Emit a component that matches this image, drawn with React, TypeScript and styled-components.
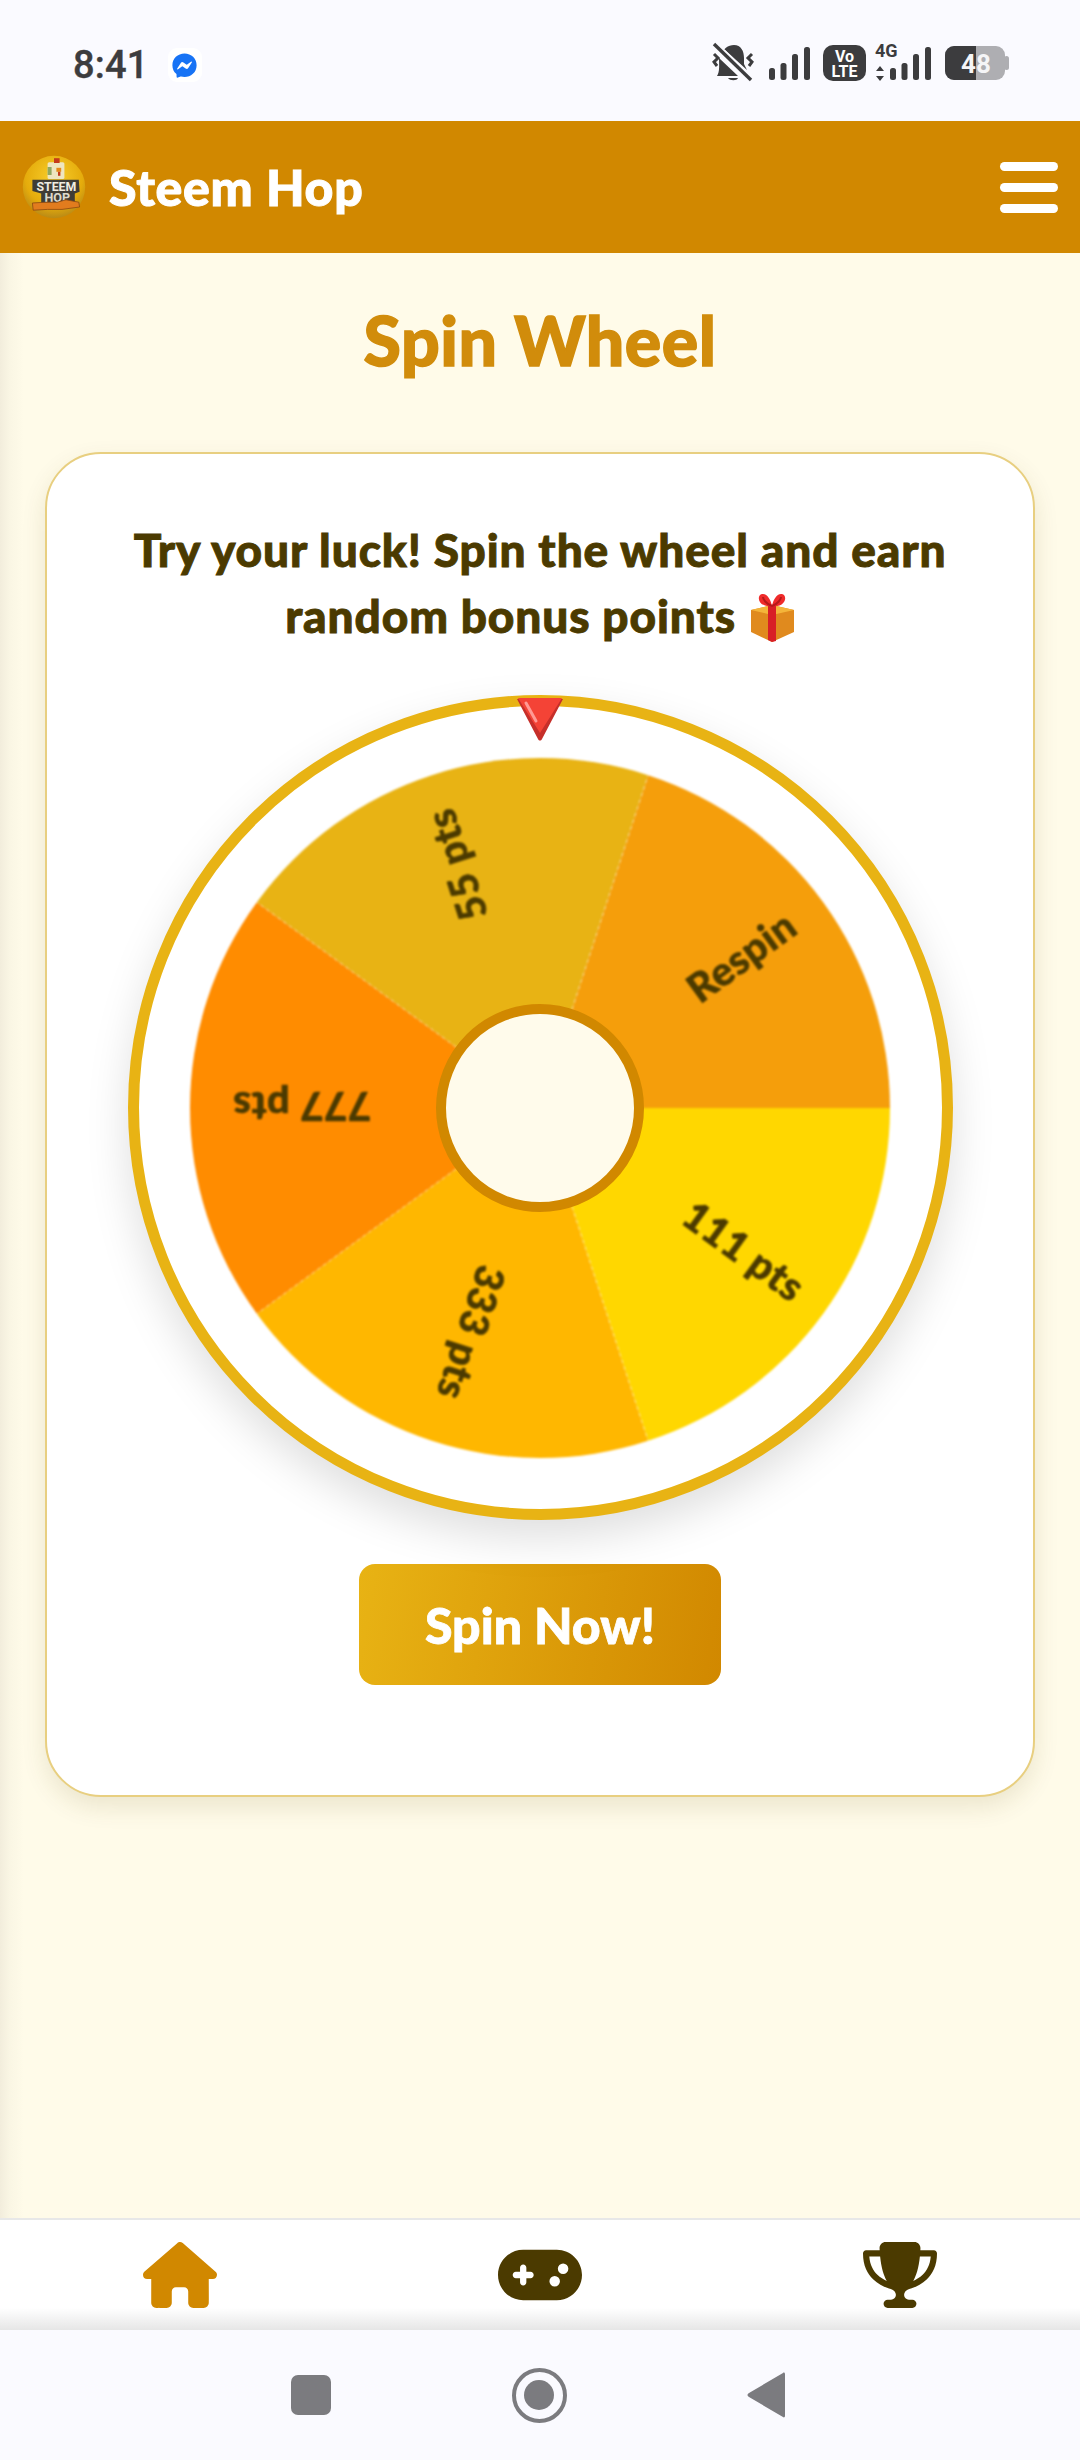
import styled, { createGlobalStyle } from "styled-components";
import { FaFacebookMessenger, FaGamepad, FaHouse, FaTrophy } from "react-icons/fa6";

const GlobalStyle = createGlobalStyle`
  html, body {
    margin: 0;
    padding: 0;
    background: #fffbe9;
  }
  * {
    box-sizing: border-box;
  }
`;

const FONT = `Lato, "Noto Sans", sans-serif`;
const DARK = "#4b3a00";
const GOLD = "#d18800";
const GREY = "#3c3c3e";

const Page = styled.div`
  width: 1080px;
  height: 2460px;
  display: flex;
  flex-direction: column;
  overflow: hidden;
  font-family: ${FONT};
`;

const StatusBar = styled.div`
  height: 121px;
  background: #fafaff;
  display: flex;
  justify-content: space-between;
  padding: 42px 71px 0 73px;
`;

const StatusLeft = styled.div`
  display: flex;
  align-items: center;
  height: 40px;
  margin-top: 3px;
  gap: 19px;
`;

const Time = styled.span`
  font-family: Roboto, sans-serif;
  font-weight: 500;
  font-size: 38px;
  line-height: 40px;
  color: ${GREY};
  letter-spacing: 0.2px;
  -webkit-text-stroke: 0.4px ${GREY};
`;

const MessengerBadge = styled.div`
  width: 34px;
  height: 34px;
  border-radius: 9px;
  background: #fff;
  display: flex;
  align-items: center;
  justify-content: center;
  color: #1773f5;
`;

const StatusRight = styled.div`
  display: flex;
  height: 40px;
`;

const StatusIcon = styled.svg<{ $gap: number }>`
  display: block;
  height: 40px;
  margin-right: ${(p) => p.$gap}px;
  overflow: visible;
`;

const IconText = styled.text`
  font-family: Roboto, sans-serif;
  font-weight: 700;
`;

const AppHeader = styled.header`
  height: 132px;
  background: ${GOLD};
  display: flex;
  align-items: center;
  justify-content: space-between;
  padding: 0 22px;
`;

const Brand = styled.div`
  display: flex;
  align-items: center;
  gap: 23px;
`;

const BrandName = styled.span`
  color: #fff;
  font-weight: 900;
  font-size: 50px;
  letter-spacing: 0.7px;
  -webkit-text-stroke: 1px #fff;
`;

const Burger = styled.div`
  width: 58px;
  display: flex;
  flex-direction: column;
  gap: 12px;
`;

const BurgerLine = styled.span`
  display: block;
  height: 9px;
  border-radius: 5px;
  background: #fff;
`;

const Main = styled.main`
  flex: 1;
  padding: 47px 45px 0;
  background: linear-gradient(90deg, #f2eddc 0, #faf6e4 10px, #fffbe9 24px);
`;

const Title = styled.h1`
  margin: 0 0 72px;
  height: 80px;
  line-height: 80px;
  text-align: center;
  color: #d18c0b;
  font-size: 68px;
  font-weight: 900;
  letter-spacing: 0.5px;
  -webkit-text-stroke: 1.4px #d18c0b;
`;

const Card = styled.section`
  height: 1345px;
  background: #fff;
  border: 2px solid #e8cf80;
  border-radius: 56px;
  box-shadow: 0 10px 24px rgba(90, 70, 0, 0.12);
  padding: 63px 0 0;
  display: flex;
  flex-direction: column;
  align-items: center;
`;

const Intro = styled.p`
  margin: 0 0 46px;
  font-size: 46px;
  line-height: 66px;
  font-weight: 900;
  letter-spacing: 0.9px;
  color: ${DARK};
  text-align: center;
  -webkit-text-stroke: 0.9px ${DARK};
`;

const GiftIcon = styled.svg`
  width: 45px;
  height: 49px;
  vertical-align: -9px;
  margin-left: 2px;
`;

const Wheel = styled.div`
  position: relative;
  width: 825px;
  height: 825px;
  flex: none;
  border: 11px solid #e8b314;
  border-radius: 50%;
  background: #fff;
  box-shadow: 0 18px 44px rgba(0, 0, 0, 0.13);
  display: flex;
  align-items: center;
  justify-content: center;
`;

const Slices = styled.svg`
  width: 700px;
  height: 700px;
  display: block;
  filter: blur(0.9px);
`;

const SliceLabel = styled.text`
  font-family: ${FONT};
  font-weight: 900;
  font-size: 40px;
  letter-spacing: 0.6px;
  fill: ${DARK};
  stroke: ${DARK};
  stroke-width: 0.6px;
  text-anchor: middle;
  dominant-baseline: middle;
`;

const Hub = styled.div`
  position: absolute;
  top: 50%;
  left: 50%;
  width: 208px;
  height: 208px;
  transform: translate(-50%, -50%);
  border: 10px solid #d18800;
  border-radius: 50%;
  background: #fffbeb;
`;

const Pointer = styled.svg`
  position: absolute;
  top: -9px;
  left: 50%;
  width: 50px;
  height: 44px;
  transform: translateX(-50%);
`;

const SpinButton = styled.button`
  margin-top: 44px;
  width: 362px;
  height: 121px;
  border: 0;
  border-radius: 16px;
  background: linear-gradient(100deg, #e8b314, #d18800);
  color: #fff;
  font-family: ${FONT};
  font-size: 50px;
  font-weight: 900;
  -webkit-text-stroke: 0.8px #fff;
`;

const BottomNav = styled.nav`
  height: 112px;
  border-top: 2px solid #e8e8e8;
  background: linear-gradient(180deg, #fff 0, #fff 80%, #e6e6e6 100%);
  display: grid;
  grid-template-columns: repeat(3, 1fr);
  align-items: center;
  justify-items: center;
`;

const NavItem = styled.div<{ $active?: boolean }>`
  display: flex;
  color: ${(p) => (p.$active ? GOLD : DARK)};
`;

const SystemBar = styled.div`
  height: 130px;
  background: #fafaff;
  display: flex;
  align-items: center;
  padding: 0 295px 0 291px;
  justify-content: space-between;
`;

const SysSquare = styled.div`
  width: 40px;
  height: 40px;
  border-radius: 7px;
  background: #7b7b7f;
`;

const SysCircle = styled.div`
  width: 55px;
  height: 55px;
  border-radius: 50%;
  border: 4px solid #7b7b7f;
  display: flex;
  align-items: center;
  justify-content: center;
  &::after {
    content: "";
    width: 30px;
    height: 30px;
    border-radius: 50%;
    background: #7b7b7f;
  }
`;

const SysBack = styled.svg`
  width: 38px;
  height: 46px;
  display: block;
`;

type Slice = { label: string; color: string; radius: number; dy?: number };

const SLICES: Slice[] = [
  { label: "111 pts", color: "#ffd700", radius: 249 },
  { label: "333 pts", color: "#ffb700", radius: 235 },
  { label: "777 pts", color: "#ff8c00", radius: 238, dy: 6 },
  { label: "55 pts", color: "#e8b314", radius: 257 },
  { label: "Respin", color: "#f59e0b", radius: 252 },
];

const polar = (r: number, deg: number) => {
  const a = (deg * Math.PI) / 180;
  return [350 + r * Math.cos(a), 350 + r * Math.sin(a)];
};

const Logo = () => (
  <svg width="64" height="66" viewBox="0 0 80 80">
    <defs>
      <radialGradient id="coin" cx="50%" cy="35%" r="65%">
        <stop offset="0" stopColor="#f8cf2c" />
        <stop offset="0.7" stopColor="#e5ac0c" />
        <stop offset="1" stopColor="#b98a16" />
      </radialGradient>
    </defs>
    <circle cx="40" cy="40" r="39" fill="url(#coin)" />
    <rect x="32" y="9" width="21" height="21" rx="2" fill="#eee6c0" />
    <rect x="32" y="15" width="5" height="10" fill="#8fa860" />
    <rect x="40" y="4" width="7" height="6" fill="#c43a1c" />
    <rect x="43" y="16" width="6" height="5" fill="#e58a1a" />
    <rect x="45" y="21" width="3" height="5" fill="#c43a1c" />
    <path d="M13 31h58l1 15-6 2v12H24V48l-11-3z" fill="#3f3d36" />
    <IconText x="43" y="45" fontSize="16" fill="#efece0" textAnchor="middle" textLength="50" lengthAdjust="spacingAndGlyphs">STEEM</IconText>
    <IconText x="44" y="59" fontSize="16" fill="#dcd9cb" textAnchor="middle" textLength="32" lengthAdjust="spacingAndGlyphs">HOP</IconText>
    <path d="M13 60l17-1h14l11-3 16 3 1 6-22 3H32l-18 1z" fill="#e27c1e" stroke="#8a4810" strokeWidth="1" />
  </svg>
);

const Messenger = () => (
  <MessengerBadge>
    <FaFacebookMessenger size={25} />
  </MessengerBadge>
);

const BellOff = () => (
  <StatusIcon $gap={13} width="44" viewBox="0 0 44 40" fill={GREY}>
    <path d="M10 13c2-6 7-10 13-10 7 0 10 6 10 13v6l3 6-22-20zM8 16l19 18H6c3-4 2-12 2-18zM17 36h10c-1 3-8 3-10 0z" />
    <path d="M2 1l36 35" stroke="#fafaff" strokeWidth="7" />
    <path d="M3 2l37 36" stroke={GREY} strokeWidth="3.4" />
    <path d="M3 12l4 4-4 4 3 4M41 12l-4 4 4 4-3 4" fill="none" stroke={GREY} strokeWidth="3" />
  </StatusIcon>
);

const Bars = ({ gap, width }: { gap: number; width: number }) => (
  <StatusIcon $gap={gap} width={width} viewBox={`0 0 ${width} 40`} fill={GREY}>
    <rect x={width - 41} y="26" width="6" height="12" rx="2.5" />
    <rect x={width - 29.5} y="21" width="6" height="17" rx="2.5" />
    <rect x={width - 18} y="12" width="6" height="26" rx="2.5" />
    <rect x={width - 6} y="5" width="6" height="33" rx="2.5" />
    {width > 42 && (
      <>
        <IconText x="0" y="15" fontSize="18" fill={GREY}>4G</IconText>
        <path d="M5 24l4 5H1zM5 39l4-5H1z" />
      </>
    )}
  </StatusIcon>
);

const VoLte = () => (
  <StatusIcon $gap={9} width="43" viewBox="0 0 43 40">
    <rect y="3" width="43" height="36" rx="10" fill={GREY} />
    <IconText x="21.5" y="20" fontSize="16" fill="#fff" textAnchor="middle">Vo</IconText>
    <IconText x="21.5" y="35" fontSize="16" fill="#fff" textAnchor="middle">LTE</IconText>
  </StatusIcon>
);

const Battery = () => (
  <StatusIcon $gap={0} width="64" viewBox="0 0 64 40">
    <rect x="0" y="4" width="60" height="34" rx="9" fill="#aeaeb2" />
    <rect x="59" y="14" width="5" height="14" rx="2.5" fill="#aeaeb2" />
    <path d="M9 4h22v34H9a9 9 0 0 1-9-9V13a9 9 0 0 1 9-9z" fill={GREY} />
    <IconText x="31" y="31" fontSize="26" fill="#f5f5f7" textAnchor="middle">48</IconText>
  </StatusIcon>
);

const Gift = () => (
  <GiftIcon viewBox="0 0 45 49">
    <path d="M1 17l21-5 22 5v22L22 49 1 39z" fill="#e08a1e" />
    <path d="M22 22L1 17l21-5 22 5z" fill="#f4b53a" />
    <path d="M18 13h8v35l-4 1-4-2z" fill="#d81f26" />
    <path d="M22 13C8 15 6 2 12 1c5-1 9 6 10 12zM22 13c1-6 5-13 10-12 6 1 4 14-10 12z" fill="#ef2b2b" />
    <path d="M22 13C16 11 13 6 13 4M22 13c6-2 9-7 9-9" stroke="#b51a1a" strokeWidth="2" fill="none" />
  </GiftIcon>
);

const WheelSlices = () => (
  <Slices viewBox="0 0 700 700">
    {SLICES.map((s, i) => {
      const start = i * 72;
      const [x1, y1] = polar(350, start);
      const [x2, y2] = polar(350, start + 72);
      return <path key={s.label} d={`M350 350L${x1} ${y1}A350 350 0 0 1 ${x2} ${y2}Z`} fill={s.color} />;
    })}
    {[72, 144, 216, 288].map((deg) => {
      const [x1, y1] = polar(104, deg);
      const [x2, y2] = polar(350, deg);
      return <line key={deg} x1={x1} y1={y1} x2={x2} y2={y2} stroke="#fff" strokeOpacity="0.6" strokeDasharray="3 4" />;
    })}
    {SLICES.map((s, i) => {
      const mid = i * 72 + 36;
      const [x, y] = polar(s.radius, mid);
      return (
        <SliceLabel key={s.label} x={x} y={y + (s.dy ?? 0)} transform={`rotate(${mid} ${x} ${y})`}>
          {s.label}
        </SliceLabel>
      );
    })}
  </Slices>
);

export default function App() {
  return (
    <Page>
      <GlobalStyle />
      <StatusBar>
        <StatusLeft>
          <Time>8:41</Time>
          <Messenger />
        </StatusLeft>
        <StatusRight>
          <BellOff />
          <Bars gap={13} width={42} />
          <VoLte />
          <Bars gap={14} width={56} />
          <Battery />
        </StatusRight>
      </StatusBar>
      <AppHeader>
        <Brand>
          <Logo />
          <BrandName>Steem Hop</BrandName>
        </Brand>
        <Burger>
          <BurgerLine />
          <BurgerLine />
          <BurgerLine />
        </Burger>
      </AppHeader>
      <Main>
        <Title>Spin Wheel</Title>
        <Card>
          <Intro>
            Try your luck! Spin the wheel and earn
            <br />
            random bonus points <Gift />
          </Intro>
          <Wheel>
            <WheelSlices />
            <Hub />
            <Pointer viewBox="0 0 50 44">
              <path d="M2 2h46L27 42c-1 2-3 2-4 0z" fill="#c62f2a" />
              <path d="M3 1h44L25 36z" fill="#f44336" />
              <path d="M11 6l10 18" stroke="#ff9a94" strokeWidth="3" strokeLinecap="round" />
            </Pointer>
          </Wheel>
          <SpinButton>Spin Now!</SpinButton>
        </Card>
      </Main>
      <BottomNav>
        <NavItem $active>
          <FaHouse size={74} />
        </NavItem>
        <NavItem>
          <FaGamepad size={84} />
        </NavItem>
        <NavItem>
          <FaTrophy size={74} />
        </NavItem>
      </BottomNav>
      <SystemBar>
        <SysSquare />
        <SysCircle />
        <SysBack viewBox="0 0 38 46">
          <path d="M36 1c1-1 2 0 2 1v42c0 1-1 2-2 1L2 25c-2-1-2-3 0-4z" fill="#7b7b7f" />
        </SysBack>
      </SystemBar>
    </Page>
  );
}
